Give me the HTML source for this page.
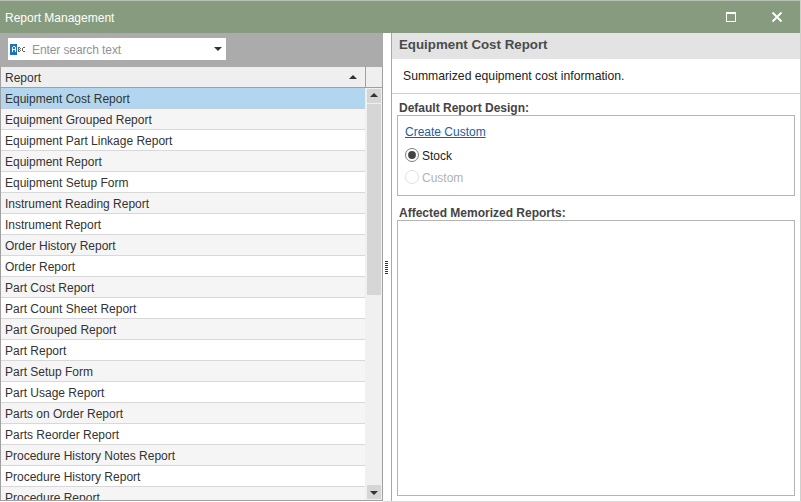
<!DOCTYPE html>
<html><head><meta charset="utf-8">
<style>
*{margin:0;padding:0;box-sizing:border-box}
html,body{width:801px;height:502px;overflow:hidden;background:#fff;font-family:"Liberation Sans",sans-serif;font-size:12px;color:#333}
.abs{position:absolute}
#top{left:0;top:0;width:801px;height:1px;background:#b9c1b5}
#title{left:0;top:1px;width:801px;height:32px;background:#879c7e}
#title .t{left:5px;top:10px;color:#fff;font-size:12px;line-height:14px;white-space:nowrap}
#search{left:0;top:33px;width:383px;height:34px;background:#ababab}
#sbox{left:8px;top:38px;width:218px;height:22px;background:#fff}
#sbox .ph{left:24px;top:5px;font-size:12px;letter-spacing:-0.1px;line-height:14px;color:#939393;white-space:nowrap}
#hdr{left:0;top:67px;width:383px;height:21px;background:#efefef;border-bottom:1px solid #a0a0a0;border-left:1px solid #a0a0a0;border-right:1px solid #a0a0a0}
#hdr .t{left:4px;top:4px;line-height:14px;color:#333}
#hdr .div{left:364px;top:0;width:1px;height:20px;background:#a0a0a0}
#grid{left:0;top:88px;width:365px;height:412px;overflow:hidden;background:#fff}
#gl{left:0;top:67px;width:1px;height:434px;background:#a0a0a0}
#gr{left:382px;top:67px;width:1px;height:434px;background:#a0a0a0}
#gb{left:0;top:500px;width:383px;height:1px;background:#a0a0a0}
.row{position:absolute;left:0;width:365px;height:21px;border-bottom:1px solid #d8d8d8;white-space:nowrap}
.row span{position:absolute;left:5px;top:4px;line-height:14px;color:#333}
.row.g{background:#f5f5f5}
.row.sel{background:#b2d6ef;border-bottom-color:#c2cfd8}
#track{left:365px;top:88px;width:17px;height:412px;background:#f0f0f0}
#upb{left:367px;top:89px;width:14px;height:14px;background:#d6d6d6}
#thumb{left:367px;top:104px;width:14px;height:191px;background:#d6d6d6}
#dnb{left:367px;top:485px;width:14px;height:14px;background:#d6d6d6}
#split{left:383px;top:33px;width:8px;height:469px;background:#fff}
#sline{left:391px;top:33px;width:1px;height:469px;background:#a8a8a8}
#rhead{left:392px;top:33px;width:408px;height:26px;background:#e3e3e3}
#rhead .t{left:7px;top:4px;font-size:13.3px;font-weight:bold;line-height:16px;color:#4b4b4b;white-space:nowrap}
#desc{left:403px;top:69px;font-size:12.2px;line-height:14px;color:#222;white-space:nowrap}
#dline{left:392px;top:93px;width:408px;height:1px;background:#d0d0d0}
.lbl{font-weight:bold;color:#444;line-height:14px;white-space:nowrap}
#box1{left:397px;top:115px;width:398px;height:81px;border:1px solid #b4b4b4}
#box2{left:397px;top:220px;width:398px;height:276px;border:1px solid #b4b4b4}
#link{left:405px;top:125px;color:#1a5ea8;text-decoration:underline;line-height:14px;white-space:nowrap}
#rline{left:800px;top:0;width:1px;height:502px;background:#cdd0cb}
#bline{left:383px;top:501px;width:418px;height:1px;background:#dcdcdc}
</style></head><body>
<div id="top" class="abs"></div>
<div id="title" class="abs"><div class="t abs">Report Management</div>
<svg class="abs" style="left:726px;top:11px" width="10" height="10" viewBox="0 0 10 10" shape-rendering="crispEdges"><rect x="0" y="0" width="10" height="2" fill="#fff"/><rect x="0" y="0" width="1" height="10" fill="#fff"/><rect x="9" y="0" width="1" height="10" fill="#fff"/><rect x="0" y="9" width="10" height="1" fill="#fff"/></svg>
<svg class="abs" style="left:771px;top:10px" width="12" height="12" viewBox="0 0 12 12"><path d="M1.5 1.5L10.5 10.5M10.5 1.5L1.5 10.5" stroke="#fff" stroke-width="1.8" fill="none"/></svg>
</div>
<div id="search" class="abs"></div>
<div id="sbox" class="abs">
<svg class="abs" style="left:2px;top:6px" width="18" height="11" viewBox="0 0 18 11" shape-rendering="crispEdges"><rect x="0" y="0" width="7" height="11" fill="#1b72c4"/><rect x="3" y="2" width="1" height="1" fill="#fff"/><rect x="4" y="2" width="1" height="1" fill="#fff"/><rect x="2" y="3" width="1" height="1" fill="#fff"/><rect x="5" y="3" width="1" height="1" fill="#fff"/><rect x="2" y="4" width="1" height="1" fill="#fff"/><rect x="5" y="4" width="1" height="1" fill="#fff"/><rect x="2" y="5" width="1" height="1" fill="#fff"/><rect x="3" y="5" width="1" height="1" fill="#fff"/><rect x="4" y="5" width="1" height="1" fill="#fff"/><rect x="5" y="5" width="1" height="1" fill="#fff"/><rect x="2" y="6" width="1" height="1" fill="#fff"/><rect x="5" y="6" width="1" height="1" fill="#fff"/><rect x="2" y="7" width="1" height="1" fill="#fff"/><rect x="5" y="7" width="1" height="1" fill="#fff"/><rect x="8" y="3" width="1" height="1" fill="#666"/><rect x="9" y="3" width="1" height="1" fill="#666"/><rect x="8" y="4" width="1" height="1" fill="#666"/><rect x="10" y="4" width="1" height="1" fill="#666"/><rect x="8" y="5" width="1" height="1" fill="#666"/><rect x="9" y="5" width="1" height="1" fill="#666"/><rect x="8" y="6" width="1" height="1" fill="#666"/><rect x="10" y="6" width="1" height="1" fill="#666"/><rect x="8" y="7" width="1" height="1" fill="#666"/><rect x="9" y="7" width="1" height="1" fill="#666"/><rect x="13" y="3" width="1" height="1" fill="#666"/><rect x="14" y="3" width="1" height="1" fill="#666"/><rect x="12" y="4" width="1" height="1" fill="#666"/><rect x="12" y="5" width="1" height="1" fill="#666"/><rect x="12" y="6" width="1" height="1" fill="#666"/><rect x="13" y="7" width="1" height="1" fill="#666"/><rect x="14" y="7" width="1" height="1" fill="#666"/></svg>
<div class="ph abs">Enter search text</div>
<svg class="abs" style="left:206px;top:9px" width="8" height="4" viewBox="0 0 8 4"><path d="M0 0H8L4 4Z" fill="#333"/></svg>
</div>
<div id="hdr" class="abs"><div class="t abs">Report</div>
<svg class="abs" style="left:348px;top:8px" width="8" height="4" viewBox="0 0 8 4"><path d="M0 4H8L4 0Z" fill="#333"/></svg>
<div class="div abs"></div></div>
<div id="grid" class="abs">
<div class="row sel" style="top:0px"><span>Equipment Cost Report</span></div>
<div class="row g" style="top:21px"><span>Equipment Grouped Report</span></div>
<div class="row" style="top:42px"><span>Equipment Part Linkage Report</span></div>
<div class="row g" style="top:63px"><span>Equipment Report</span></div>
<div class="row" style="top:84px"><span>Equipment Setup Form</span></div>
<div class="row g" style="top:105px"><span>Instrument Reading Report</span></div>
<div class="row" style="top:126px"><span>Instrument Report</span></div>
<div class="row g" style="top:147px"><span>Order History Report</span></div>
<div class="row" style="top:168px"><span>Order Report</span></div>
<div class="row g" style="top:189px"><span>Part Cost Report</span></div>
<div class="row" style="top:210px"><span>Part Count Sheet Report</span></div>
<div class="row g" style="top:231px"><span>Part Grouped Report</span></div>
<div class="row" style="top:252px"><span>Part Report</span></div>
<div class="row g" style="top:273px"><span>Part Setup Form</span></div>
<div class="row" style="top:294px"><span>Part Usage Report</span></div>
<div class="row g" style="top:315px"><span>Parts on Order Report</span></div>
<div class="row" style="top:336px"><span>Parts Reorder Report</span></div>
<div class="row g" style="top:357px"><span>Procedure History Notes Report</span></div>
<div class="row" style="top:378px"><span>Procedure History Report</span></div>
<div class="row g" style="top:399px"><span>Procedure Report</span></div>
</div>
<div id="track" class="abs"></div>
<div id="upb" class="abs"><svg class="abs" style="left:3px;top:4px" width="8" height="4" viewBox="0 0 8 4"><path d="M0 4H8L4 0Z" fill="#333"/></svg></div>
<div id="thumb" class="abs"></div>
<div id="dnb" class="abs"><svg class="abs" style="left:3px;top:6px" width="8" height="4" viewBox="0 0 8 4"><path d="M0 0H8L4 4Z" fill="#333"/></svg></div>
<div id="gl" class="abs"></div><div id="gr" class="abs"></div><div id="gb" class="abs"></div>
<div id="split" class="abs">
<svg class="abs" style="left:2px;top:228px" width="3" height="13" viewBox="0 0 3 13"><g fill="#333"><rect x="0" y="0" width="3" height="1"/><rect x="0" y="2" width="3" height="1"/><rect x="0" y="4" width="3" height="1"/><rect x="0" y="6" width="3" height="1"/><rect x="0" y="8" width="3" height="1"/><rect x="0" y="10" width="3" height="1"/><rect x="0" y="12" width="3" height="1"/></g></svg>
</div>
<div id="sline" class="abs"></div>
<div id="rhead" class="abs"><div class="t abs">Equipment Cost Report</div></div>
<div id="desc" class="abs">Summarized equipment cost information.</div>
<div id="dline" class="abs"></div>
<div class="lbl abs" style="left:399px;top:101px">Default Report Design:</div>
<div id="box1" class="abs"></div>
<div id="link" class="abs">Create Custom</div>
<svg class="abs" style="left:404px;top:147px" width="16" height="16" viewBox="0 0 16 16"><circle cx="8" cy="8" r="6.5" fill="#fff" stroke="#6e6e6e" stroke-width="0.9"/><circle cx="8" cy="8" r="3.9" fill="#434343"/></svg>
<div class="abs" style="left:422px;top:149px;line-height:14px;color:#222">Stock</div>
<svg class="abs" style="left:404px;top:169px" width="16" height="16" viewBox="0 0 16 16"><circle cx="8" cy="8" r="6.5" fill="#fff" stroke="#dcdcdc" stroke-width="0.9"/></svg>
<div class="abs" style="left:422px;top:171px;line-height:14px;color:#b3b3b3">Custom</div>
<div class="lbl abs" style="left:399px;top:206px">Affected Memorized Reports:</div>
<div id="box2" class="abs"></div>
<div id="rline" class="abs"></div>
<div id="bline" class="abs"></div>
</body></html>
